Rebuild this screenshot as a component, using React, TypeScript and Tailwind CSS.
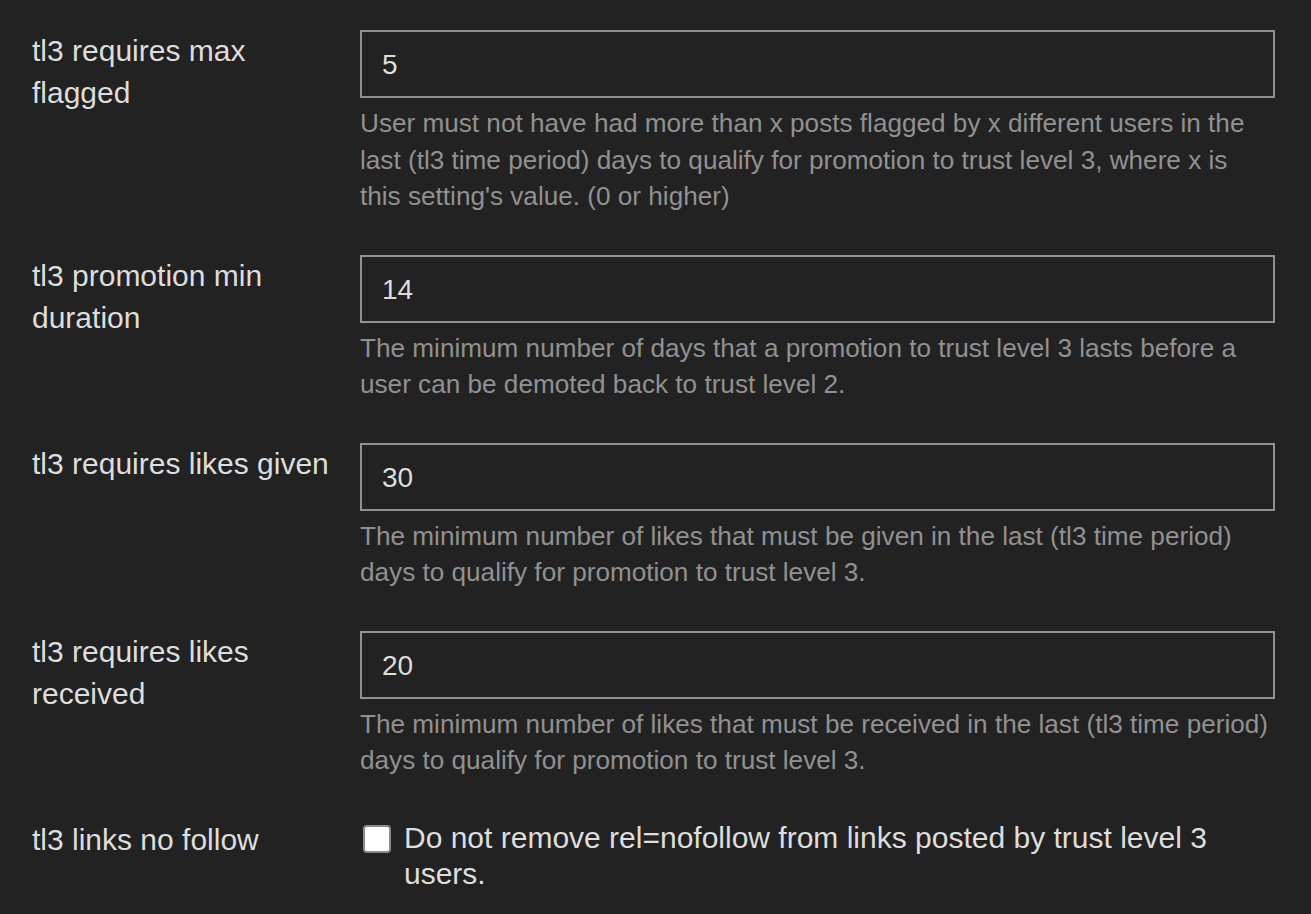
const SETTINGS = [
  {
    label: 'tl3 requires max flagged',
    value: '5',
    description:
      "User must not have had more than x posts flagged by x different users in the last (tl3 time period) days to qualify for promotion to trust level 3, where x is this setting's value. (0 or higher)",
  },
  {
    label: 'tl3 promotion min duration',
    value: '14',
    description:
      'The minimum number of days that a promotion to trust level 3 lasts before a user can be demoted back to trust level 2.',
  },
  {
    label: 'tl3 requires likes given',
    value: '30',
    description:
      'The minimum number of likes that must be given in the last (tl3 time period) days to qualify for promotion to trust level 3.',
  },
  {
    label: 'tl3 requires likes received',
    value: '20',
    description:
      'The minimum number of likes that must be received in the last (tl3 time period) days to qualify for promotion to trust level 3.',
  },
]

export default function App() {
  return (
    <div className="min-h-screen bg-[#222222] pt-[30px] pl-[32px] font-['Liberation_Sans',Arial,sans-serif]">
      <div className="flex flex-col gap-10">
        {SETTINGS.map((s) => (
          <div key={s.label} className="flex">
            <div className="w-[300px] shrink-0 mr-[28px] text-[30px] leading-[42px] text-[#dddddd]">
              {s.label}
            </div>
            <div className="w-[915px]">
              <input
                type="text"
                defaultValue={s.value}
                className="block h-[68px] w-full border-2 border-[#919191] bg-[#222222] px-[20px] pt-[2px] text-[28px] text-[#dddddd] outline-none"
              />
              <p className="mt-[7px] text-[26.15px] leading-[36.5px] text-[#919191]">{s.description}</p>
            </div>
          </div>
        ))}

        {/* checkbox setting */}
        <div className="flex">
          <div className="w-[300px] shrink-0 mr-[28px] text-[30px] leading-[42px] text-[#dddddd]">
            tl3 links no follow
          </div>
          <label className="flex w-[915px] items-start gap-[13px] pt-[1px]">
            <span className="ml-[3px] mt-[5px] block h-[28px] w-[28px] shrink-0 rounded-[4px] border-2 border-[#8a8a96] bg-white" />
            <span className="text-[30px] leading-[36px] text-[#dddddd]">
              Do not remove rel=nofollow from links posted by trust level 3 users.
            </span>
          </label>
        </div>
      </div>
    </div>
  )
}
